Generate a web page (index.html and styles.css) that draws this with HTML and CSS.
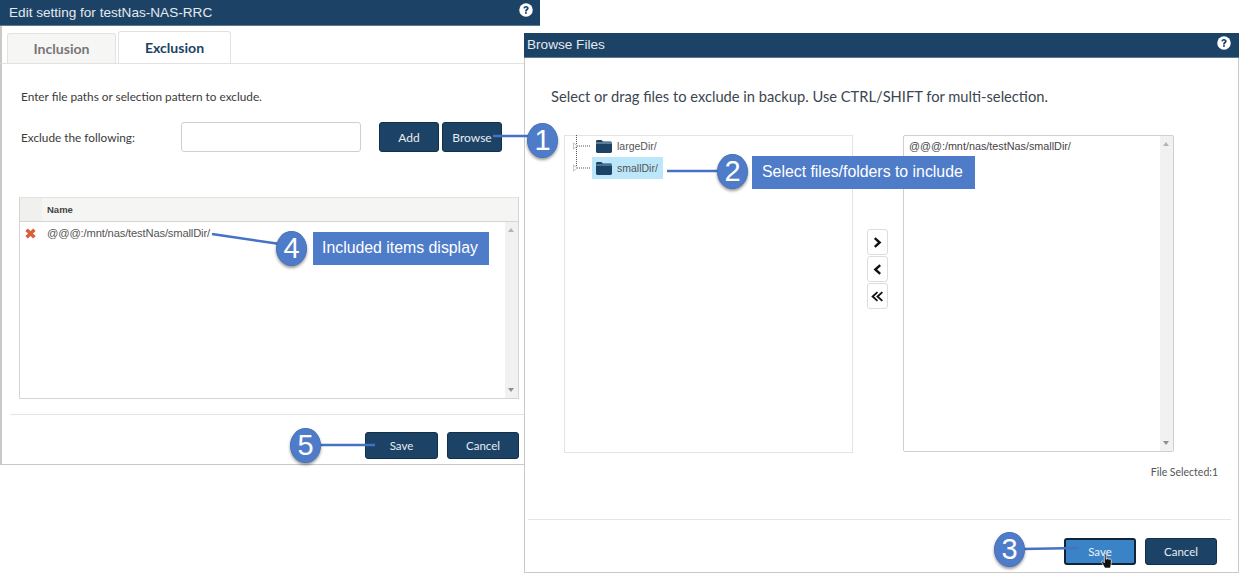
FILE: index.html
```html
<!DOCTYPE html>
<html lang="en">
<head>
<meta charset="utf-8">
<title>Edit setting</title>
<link rel="stylesheet" href="styles.css">
</head>
<body>
<section class="dialog edit">
  <header class="titlebar">
    <span>Edit setting for testNas-NAS-RRC</span>
    <svg class="help" viewBox="0 0 12 12"><circle cx="6" cy="6" r="5.8" fill="#fff"/><path d="M3.700 4.600C3.800 3.200 4.800 2.500 6 2.500c1.300 0 2.300.8 2.300 1.900 0 1.600-1.600 1.500-1.600 2.800H5.200c0-2 1.500-1.800 1.500-2.700 0-.4-.3-.6-.7-.6-.5 0-.8.300-.9.800z" fill="#1c4366"/><rect x="5.200" y="7.800" width="1.500" height="1.500" fill="#1c4366"/></svg>
  </header>
  <nav class="tabs">
    <span class="tab">Inclusion</span>
    <span class="tab active">Exclusion</span>
  </nav>
  <div class="edit-body">
    <p class="hint">Enter file paths or selection pattern to exclude.</p>
    <div class="form-row">
      <label class="form-label">Exclude the following:</label>
      <span class="input"></span>
      <span class="btn add">Add</span>
      <span class="btn browse">Browse</span>
    </div>
    <div class="grid">
      <div class="grid-head"><span class="grid-corner"></span><span class="grid-name">Name</span></div>
      <div class="grid-body">
        <div class="grid-rows">
          <div class="grid-row">
            <svg class="del" viewBox="0 0 12 12"><path d="M3 .6 6 3.400 9 .6 11.600 3.200 8.600 6l3 2.800L9 11.400 6 8.600 3 11.400.4 8.800l3-2.800-3-2.800z" fill="#d9603b"/></svg>
            <span class="path">@@@:/mnt/nas/testNas/smallDir/</span>
          </div>
        </div>
        <div class="scrollbar"><i class="up"></i><i class="down"></i></div>
      </div>
    </div>
    <div class="footer edit-footer">
      <span class="btn action">Save</span>
      <span class="btn action">Cancel</span>
    </div>
  </div>
</section>

<section class="dialog files">
  <header class="titlebar files-bar">
    <span>Browse Files</span>
    <svg class="help" viewBox="0 0 12 12"><circle cx="6" cy="6" r="5.800" fill="#fff"/><path d="M3.700 4.600C3.800 3.200 4.800 2.500 6 2.500c1.300 0 2.300.8 2.300 1.900 0 1.600-1.600 1.500-1.600 2.800H5.200c0-2 1.500-1.800 1.500-2.700 0-.4-.3-.6-.7-.6-.5 0-.8.300-.9.800z" fill="#1c4366"/><rect x="5.200" y="7.800" width="1.500" height="1.500" fill="#1c4366"/></svg>
  </header>
  <p class="lead">Select or drag files to exclude in backup. Use CTRL/SHIFT for multi-selection.</p>
  <div class="picker">
    <div class="tree">
      <div class="tree-row">
        <svg class="twig" viewBox="0 0 19 22"><path d="M3.500 0V22M4 11H18" stroke="#555" stroke-dasharray="1 1" fill="none"/><path d="M.5 8l4 3-4 3z" fill="#fff" stroke="#aaa" stroke-width=".7"/></svg>
        <span class="node">
          <svg class="folder" viewBox="0 0 16 13"><path d="M0 1.500C0 .7.600 0 1.400 0h4L7 1.600h7.600c.8 0 1.400.6 1.400 1.400v8.600c0 .8-.6 1.400-1.400 1.400H1.400C.6 13 0 12.400 0 11.600z" fill="#1c4366"/><path d="M0 3h16" stroke="#fff" stroke-width=".6"/></svg>
          largeDir/
        </span>
      </div>
      <div class="tree-row">
        <svg class="twig" viewBox="0 0 19 22"><path d="M3.500 0V11M4 11H18" stroke="#555" stroke-dasharray="1 1" fill="none"/><path d="M.5 8l4 3-4 3z" fill="#fff" stroke="#aaa" stroke-width=".7"/></svg>
        <span class="node selected">
          <svg class="folder" viewBox="0 0 16 13"><path d="M0 1.500C0 .7.600 0 1.400 0h4L7 1.600h7.600c.8 0 1.400.6 1.400 1.400v8.600c0 .8-.6 1.400-1.400 1.400H1.400C.6 13 0 12.400 0 11.600z" fill="#1c4366"/><path d="M0 3h16" stroke="#bce6fa" stroke-width=".6"/></svg>
          smallDir/
        </span>
      </div>
    </div>
    <div class="movers">
      <span class="mover"><svg viewBox="0 0 12 12"><path d="M3.500 2 8 6l-4.500 4" fill="none" stroke="#111" stroke-width="2.200"/></svg></span>
      <span class="mover"><svg viewBox="0 0 12 12"><path d="M8.500 2 4 6l4.500 4" fill="none" stroke="#111" stroke-width="2.200"/></svg></span>
      <span class="mover"><svg viewBox="0 0 12 12"><path d="M6 2 1.500 6 6 10M10.500 2 6 6l4.500 4" fill="none" stroke="#111" stroke-width="1.700"/></svg></span>
    </div>
    <div class="chosen">
      <div class="chosen-list">@@@:/mnt/nas/testNas/smallDir/</div>
      <div class="scrollbar"><i class="up"></i><i class="down"></i></div>
    </div>
  </div>
  <p class="count">File Selected:1</p>
  <div class="footer files-footer">
    <span class="btn action hover">Save</span>
    <span class="btn action">Cancel</span>
  </div>
</section>

<svg class="connectors" viewBox="0 0 1244 577">
  <path d="M493 136H530M667 171H720M212 234 280 244M320 445H375M1022 549 1079 548"/>
</svg>
<span class="badge b1">1</span>
<span class="badge b2">2</span>
<span class="badge b3">3</span>
<span class="badge b4">4</span>
<span class="badge b5">5</span>
<span class="note n2">Select files/folders to include</span>
<span class="note n4">Included items display</span>
<svg class="cursor" viewBox="0 0 14 18"><path d="M4 1.500c0-1 2-1 2 0V7h.5c0-1 1.800-1 1.800 0 0-.8 1.800-.8 1.800.2 0-.6 1.700-.6 1.700.5V12l-1 5H4.500L1 10.500c-.6-1 .8-2 1.500-1L4 11z" fill="#111" stroke="#fff" stroke-width=".8"/></svg>
</body>
</html>
```
FILE: styles.css
```css
* { box-sizing: border-box; }
html, body { margin: 0; height: 100%; }
body {
  position: relative;
  width: 1244px;
  height: 577px;
  overflow: hidden;
  background: #fff;
  font-family: Lato, "Liberation Sans", sans-serif;
  color: #333;
}
p { margin: 0; }

.dialog { position: absolute; background: #fff; }
.edit {
  left: 0; top: 0; width: 540px; height: 465px;
  border-bottom: 1px solid #c9c9c9;
}
.files {
  left: 524px; top: 33px; width: 715px; height: 540px;
  border-left: 1px solid #c9c9c9;
  border-right: 1px solid #c9c9c9;
  border-bottom: 1px solid #c9c9c9;
  z-index: 2;
}

.titlebar {
  display: flex;
  align-items: center;
  justify-content: space-between;
  height: 26px;
  padding: 0 7px 1px 9px;
  background: #1c4366;
  border-bottom: 1px solid #5d7a94;
  color: #e4e9ee;
  font: 13.600px "Liberation Sans", sans-serif;
}
.files-bar { height: 25px; margin-left: -1px; margin-right: -1px; padding: 0 8px 1px 3px; font-size: 13.600px; }
.help { width: 14px; height: 14px; margin-top: -4px; }

.tabs {
  display: flex;
  align-items: flex-end;
  gap: 2px;
  height: 37px;
  padding-left: 5px;
  border-left: 2px solid #c9c9c9;
  font-size: 14.100px;
  font-weight: 700;
}
.tab {
  width: 109px;
  height: 30px;
  display: flex;
  align-items: center;
  justify-content: center;
  background: #f6f6f5;
  border: 1px solid #e2e2e2;
  border-bottom: 0;
  border-radius: 3px 3px 0 0;
  color: #777;
}
.tab.active {
  width: 113px;
  height: 32px;
  background: #fff;
  color: #1c4366;
}
.edit-body {
  height: 401px;
  border-left: 2px solid #c9c9c9;
  border-top: 1px solid #e2e2e2;
  padding: 25px 0 0 19px;
  font-size: 11.800px;
}
.hint { line-height: 16px; color: #3b3b3b; }
.form-row {
  display: flex;
  align-items: center;
  height: 30px;
  margin-top: 17px;
  color: #3b3b3b;
}
.form-label { width: 160px; }
.input {
  width: 180px;
  height: 30px;
  border: 1px solid #cfcfcf;
  border-radius: 3px;
  background: #fff;
  margin-right: 18px;
}
.btn {
  display: flex;
  align-items: center;
  justify-content: center;
  background: #1c4366;
  border: 1px solid #13304b;
  border-radius: 3px;
  color: #e8edf2;
  font-size: 12px;
}
.add { width: 60px; height: 30px; margin-right: 3px; }
.browse { width: 60px; height: 30px; }

.grid {
  width: 500px;
  height: 202px;
  margin: 45px 0 0 -2px;
  border: 1px solid #d5d5d5;
  border-top-color: #e2e2e2;
  display: flex;
  flex-direction: column;
}
.grid-head {
  display: flex;
  align-items: center;
  height: 24px;
  background: #f5f5f4;
  border-bottom: 1px solid #d5d5d5;
  flex: none;
}
.grid-corner { width: 22px; height: 100%; background: #f0f0ef; margin-right: 5px; }
.grid-name { font: 700 9.500px "Liberation Sans", sans-serif; color: #444; }
.grid-body { flex: 1; display: flex; min-height: 0; }
.grid-rows { flex: 1; }
.grid-row { display: flex; align-items: center; height: 22px; padding-left: 5px; }
.del { width: 11px; height: 11px; margin-right: 11px; }
.path { font: 11.200px "Liberation Sans", sans-serif; color: #555; letter-spacing: -.16px; margin-top: -1px; }
.scrollbar {
  position: relative;
  width: 13px;
  background: #f1f1f1;
  flex: none;
}
.scrollbar i { position: absolute; left: 3px; width: 0; height: 0; border-left: 3.500px solid transparent; border-right: 3.500px solid transparent; }
.scrollbar .up { top: 6px; border-bottom: 4px solid #b3b3b3; }
.scrollbar .down { bottom: 6px; border-top: 4px solid #8f8f8f; }

.footer {
  display: flex;
  justify-content: flex-end;
  gap: 9px;
  border-top: 1px solid #e5e5e5;
}
.action { width: 72px; height: 27px; font-size: 11.500px; }
.edit-footer { margin: 15px 0 0 -11px; width: 515px; padding: 17px 6px 0 0; }
.edit-footer .action:first-child { width: 73px; }

.lead {
  margin: 29px 0 0 26px;
  line-height: 18px;
  font-size: 14.700px;
  color: #3c4650;
}
.picker { position: relative; display: flex; margin: 30px 0 0 39px; height: 318px; }
.tree {
  width: 289px;
  height: 318px;
  border: 1px solid #e4e4e4;
  padding: 0 0 0 8px;
}
.tree-row { display: flex; align-items: center; height: 22px; }
.tree-row:first-child { margin-top: -1px; }
.twig { width: 19px; height: 22px; flex: none; }
.node {
  display: flex;
  align-items: center;
  gap: 5px;
  height: 22px;
  padding: 0 0 0 4px;
  width: 71px;
  font: 10.500px "Liberation Sans", sans-serif;
  color: #555;
}
.node.selected { background: #bce6fa; }
.folder { width: 16px; height: 13px; flex: none; }
.movers {
  display: flex;
  flex-direction: column;
  gap: 1px;
  width: 50px;
  padding: 94px 0 0 14px;
}
.mover {
  width: 21px;
  height: 26px;
  display: flex;
  align-items: center;
  justify-content: center;
  border: 1px solid #ddd;
  border-radius: 3px;
  background: #fff;
}
.mover svg { width: 13px; height: 13px; }
.chosen {
  width: 271px;
  height: 317px;
  display: flex;
  border: 1px solid #cfcfcf;
  border-radius: 2px;
}
.chosen-list { flex: 1; padding: 4px 5px; font: 10.800px "Liberation Sans", sans-serif; color: #444; }
.count {
  margin: 12px 20px 0 0;
  text-align: right;
  font-size: 10.500px;
  line-height: 14px;
  color: #555;
}
.files-footer { margin: 40px 7px 0 3px; padding: 18px 14px 0 0; }
.hover { background: #3a83c6; border: 2px solid #10243a; color: #eaf2fa; }

.connectors {
  position: absolute;
  left: 0; top: 0;
  width: 1244px; height: 577px;
  z-index: 3;
  pointer-events: none;
}
.connectors path { fill: none; stroke: #4472c4; stroke-width: 2.500px; }
.badge {
  position: absolute;
  z-index: 4;
  width: 31px;
  height: 35px;
  border-radius: 50%;
  background: #4f7cc8;
  border: 1px solid #4873bb;
  color: #fff;
  display: flex;
  align-items: center;
  justify-content: center;
  font: 29px "Liberation Sans", sans-serif;
  box-shadow: 0 2px 3px rgba(0,0,0,.4);
}
.b1 { left: 527px; top: 123px; }
.b2 { left: 717px; top: 154px; }
.b3 { left: 994px; top: 532px; }
.b4 { left: 276px; top: 231px; }
.b5 { left: 290px; top: 428px; }
.note {
  position: absolute;
  z-index: 3;
  height: 33px;
  display: flex;
  align-items: center;
  padding-bottom: 2px;
  background: #4f7cc8;
  color: #fff;
  font: 15.850px "Liberation Sans", sans-serif;
}
.n2 { left: 752px; top: 156px; width: 223px; padding-left: 10px; }
.n4 { left: 313px; top: 232px; width: 176px; padding-left: 9px; }
.cursor { position: absolute; z-index: 5; left: 1100px; top: 553px; width: 14px; height: 16px; }
```
